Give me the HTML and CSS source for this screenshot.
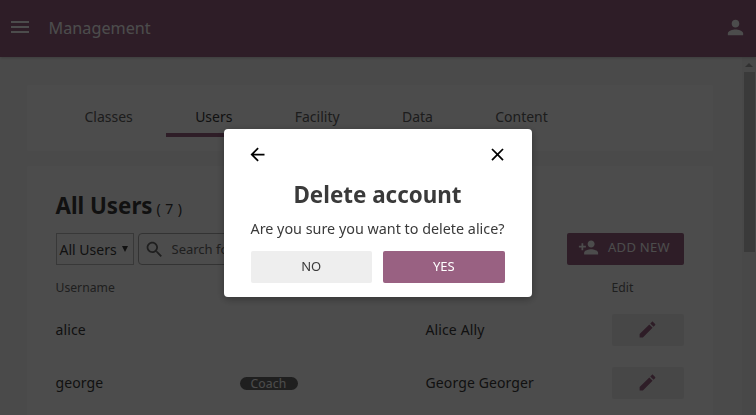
FILE: index.html
```html
<!DOCTYPE html>
<html lang="en">
<head>
<meta charset="utf-8">
<title>Management</title>
<link rel="stylesheet" href="styles.css">
</head>
<body>
<header class="appbar">
  <svg class="menu" viewBox="0 0 24 24" width="24" height="24"><path d="M3 18h18v-2H3v2zm0-5h18v-2H3v2zm0-7v2h18V6H3z"/></svg>
  <span class="title">Management</span>
  <svg class="person" viewBox="0 0 24 24" width="23" height="23"><path d="M12 12c2.21 0 4-1.79 4-4s-1.790-4-4-4-4 1.790-4 4 1.790 4 4 4zm0 2c-2.670 0-8 1.340-8 4v2h16v-2c0-2.660-5.330-4-8-4z"/></svg>
</header>
<div class="body">
  <main class="content">
    <nav class="card tabs">
      <a class="tab">Classes</a><a class="tab active">Users</a><a class="tab">Facility</a><a class="tab">Data</a><a class="tab">Content</a>
    </nav>
    <section class="card users">
      <div class="heading"><h1>All Users</h1><span class="count">( 7 )</span></div>
      <div class="toolbar">
        <div class="select"><span>All Users</span><svg width="6" height="6" viewBox="0 0 6 6"><path d="M0 0h6L3 6z"/></svg></div>
        <div class="search"><svg viewBox="0 0 24 24" width="21" height="21"><path d="M15.500 14h-.79l-.28-.27C15.410 12.590 16 11.110 16 9.500 16 5.910 13.090 3 9.500 3S3 5.910 3 9.500 5.910 16 9.500 16c1.610 0 3.090-.59 4.230-1.570l.27.28v.79l5 4.990L20.490 19l-4.990-5zm-6 0C7.010 14 5 11.990 5 9.500S7.010 5 9.500 5 14 7.010 14 9.500 11.990 14 9.500 14z"/></svg><span>Search for a user...</span></div>
        <button class="add"><svg viewBox="0 0 24 24" width="21" height="21"><path d="M15 12c2.210 0 4-1.790 4-4s-1.790-4-4-4-4 1.790-4 4 1.790 4 4 4zm-9-2V7H4v3H1v2h3v3h2v-3h3v-2H6zm9 4c-2.670 0-8 1.340-8 4v2h16v-2c0-2.660-5.330-4-8-4z"/></svg>ADD NEW</button>
      </div>
      <div class="row head"><span>Username</span><span></span><span></span><span>Edit</span></div>
      <div class="row"><span>alice</span><span></span><span>Alice Ally</span><button class="edit"><svg viewBox="0 0 24 24" width="21" height="21"><path d="M3 17.250V21h3.750L17.810 9.940l-3.750-3.750L3 17.250zM20.710 7.040c.39-.39.39-1.020 0-1.410l-2.340-2.340c-.39-.39-1.020-.39-1.410 0l-1.830 1.830 3.750 3.750 1.830-1.830z"/></svg></button></div>
      <div class="row"><span>george</span><span><b class="badge">Coach</b></span><span>George Georger</span><button class="edit"><svg viewBox="0 0 24 24" width="21" height="21"><path d="M3 17.250V21h3.750L17.810 9.940l-3.750-3.750L3 17.250zM20.710 7.040c.39-.39.39-1.020 0-1.410l-2.340-2.340c-.39-.39-1.020-.39-1.410 0l-1.830 1.830 3.750 3.750 1.830-1.830z"/></svg></button></div>
    </section>
  </main>
  <div class="scrollbar"><i class="arrow"></i><i class="thumb"></i></div>
</div>
<div class="overlay">
  <div class="modal" role="dialog">
    <div class="modal-top">
      <svg viewBox="0 0 24 24" width="21" height="21"><path d="M20 11H7.830l5.590-5.590L12 4l-8 8 8 8 1.410-1.410L7.830 13H20v-2z"/></svg>
      <svg viewBox="0 0 24 24" width="21" height="21"><path d="M19 6.410L17.590 5 12 10.590 6.410 5 5 6.410 10.590 12 5 17.590 6.410 19 12 13.410 17.590 19 19 17.590 13.410 12z"/></svg>
    </div>
    <h2>Delete account</h2>
    <p>Are you sure you want to delete alice?</p>
    <div class="actions"><button class="no">NO</button><button class="yes">YES</button></div>
  </div>
</div>
</body>
</html>
```
FILE: styles.css
```css
* { box-sizing: border-box; }
body {
  margin: 0;
  height: 415px;
  overflow: hidden;
  display: flex;
  flex-direction: column;
  background: #f9f9f9;
  color: #3a3a3a;
  font: 14px/20px "Noto Sans", sans-serif;
}
svg { display: block; flex: none; fill: currentColor; }
button { border: 0; padding: 0; border-radius: 2px; font: 13px/20px "Noto Sans", sans-serif; }
.appbar {
  height: 57px;
  flex: none;
  display: flex;
  align-items: center;
  padding: 0 9px 3px 8px;
  background: #996182;
  color: #fff;
  box-shadow: 0 1px 3px rgba(0, 0, 0, .2);
  z-index: 1;
}
.title { margin: 2px auto 0 16.6px; font-size: 16.2px; line-height: 24px; }
.body { flex: 1; display: flex; min-height: 0; }
.content { flex: 1; padding: 28px 29px 0 27px; overflow: hidden; }
.card { background: #fff; border-radius: 2px; }
.tabs { height: 66px; padding: 0 28.5px; display: flex; gap: 4.3px; align-items: flex-start; }
.tab {
  height: 52px;
  padding: 22px 29px 0;
  color: #616161;
  border-bottom: 4px solid transparent;
}
.tab.active { color: #3a3a3a; border-color: #996182; }
.users { margin-top: 15px; height: 300px; padding: 26px 29px 0 28.5px; }
.heading { display: flex; align-items: baseline; gap: 4px; height: 41px; }
.count { letter-spacing: .4px; }
h1 { margin: 0; font-size: 22.3px; line-height: 28px; }
.toolbar { display: flex; height: 32px; }
.select {
  width: 78px;
  border: 1px solid #bbb;
  display: flex;
  align-items: center;
  justify-content: space-between;
  padding: 1px 5px 0 3px;
}
.select svg { margin-bottom: 2px; }
.search {
  width: 235px;
  margin-left: 4px;
  border: 1px solid #aaa;
  border-radius: 4px;
  display: flex;
  align-items: center;
  gap: 7px;
  padding-left: 5px;
  color: #686868;
  font-size: 13px;
}
.add {
  width: 117px;
  margin-left: auto;
  background: #996182;
  color: #fff;
  display: flex;
  align-items: center;
  gap: 9px;
  padding: 0 0 4px 11px;
  letter-spacing: .3px;
}
.row {
  height: 53px;
  display: grid;
  grid-template-columns: 184px 186px 186px 72.5px;
  align-items: center;
  letter-spacing: .12px;
}
.row.head { height: 38px; padding-top: 7px; color: #686868; font-size: 12.2px; letter-spacing: 0; }
.badge {
  display: block;
  width: 58px;
  height: 13px;
  margin-top: 1px;
  border-radius: 7px;
  background: #686868;
  color: #fff;
  font-size: 12.2px;
  font-weight: 400;
  line-height: 13px;
  text-align: center;
}
.edit { height: 32px; background: #eee; color: #996182; display: flex; align-items: center; justify-content: center; padding-right: 1px; }
.scrollbar { width: 14px; background: #f1f1f1; display: flex; flex-direction: column; align-items: center; }
.arrow { margin: 6px 0 5px; border: 4px solid transparent; border-top: 0; border-bottom-color: #a3a3a3; }
.thumb { width: 11px; height: 180px; background: #c1c1c1; }
.overlay {
  position: fixed;
  inset: 0;
  z-index: 2;
  background: rgba(0, 0, 0, .7);
  display: flex;
  align-items: center;
  justify-content: center;
}
.modal {
  width: 308px;
  height: 168px;
  margin: 11px 1px 0 0;
  padding: 15px 27px 0;
  border-radius: 4px;
  background: #fff;
  box-shadow: 0 2px 8px rgba(0, 0, 0, .33);
}
.modal-top { display: flex; justify-content: space-between; margin: 0 -3px 0 -4px; color: #000; }
h2 { margin: 16px 0 0; font-size: 22.4px; line-height: 28px; text-align: center; }
p { margin: 10px -10px 12px; text-align: center; white-space: nowrap; font-size: 14.35px; }
.actions { display: flex; gap: 11px; }
.actions button { flex: 1; height: 32px; padding-bottom: 3px; }
.no { background: #eee; color: #3a3a3a; }
.yes { background: #996182; color: #fff; }
```
